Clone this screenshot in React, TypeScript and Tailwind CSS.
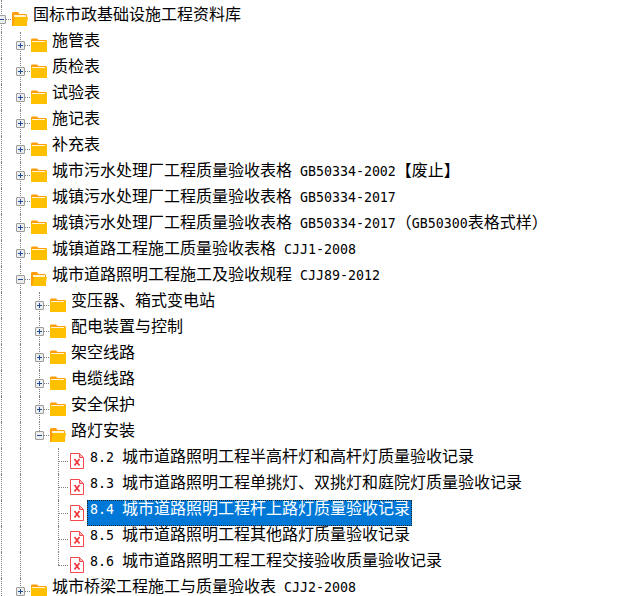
type RowData = {
  text: string
  depth: number
  kind: 'closed' | 'open' | 'file'
  selected?: boolean
  last?: boolean
}

const rows: RowData[] = [
  { text: '国标市政基础设施工程资料库', depth: 0, kind: 'open' },
  { text: '施管表', depth: 1, kind: 'closed' },
  { text: '质检表', depth: 1, kind: 'closed' },
  { text: '试验表', depth: 1, kind: 'closed' },
  { text: '施记表', depth: 1, kind: 'closed' },
  { text: '补充表', depth: 1, kind: 'closed' },
  { text: '城市污水处理厂工程质量验收表格 GB50334-2002【废止】', depth: 1, kind: 'closed' },
  { text: '城镇污水处理厂工程质量验收表格 GB50334-2017', depth: 1, kind: 'closed' },
  { text: '城镇污水处理厂工程质量验收表格 GB50334-2017（GB50300表格式样）', depth: 1, kind: 'closed' },
  { text: '城镇道路工程施工质量验收表格 CJJ1-2008', depth: 1, kind: 'closed' },
  { text: '城市道路照明工程施工及验收规程 CJJ89-2012', depth: 1, kind: 'open' },
  { text: '变压器、箱式变电站', depth: 2, kind: 'closed' },
  { text: '配电装置与控制', depth: 2, kind: 'closed' },
  { text: '架空线路', depth: 2, kind: 'closed' },
  { text: '电缆线路', depth: 2, kind: 'closed' },
  { text: '安全保护', depth: 2, kind: 'closed' },
  { text: '路灯安装', depth: 2, kind: 'open', last: true },
  { text: '8.2 城市道路照明工程半高杆灯和高杆灯质量验收记录', depth: 3, kind: 'file' },
  { text: '8.3 城市道路照明工程单挑灯、双挑灯和庭院灯质量验收记录', depth: 3, kind: 'file' },
  { text: '8.4 城市道路照明工程杆上路灯质量验收记录', depth: 3, kind: 'file', selected: true },
  { text: '8.5 城市道路照明工程其他路灯质量验收记录', depth: 3, kind: 'file' },
  { text: '8.6 城市道路照明工程工程交接验收质量验收记录', depth: 3, kind: 'file', last: true },
  { text: '城市桥梁工程施工与质量验收表 CJJ2-2008', depth: 1, kind: 'closed' },
]

function ClosedFolder() {
  return (
    <svg width="16" height="14" viewBox="0 0 16 14" className="block">
      <path d="M0 1.5 L1 0.5 H6 L7.5 2 H15 L16 3 V14 H0 Z" fill="#ff9d0a" />
      <rect x="0" y="3" width="16" height="11" fill="#ffc000" />
      <rect x="1" y="3" width="13" height="1" fill="#fff6d8" />
    </svg>
  )
}

function OpenFolder() {
  return (
    <svg width="16" height="14" viewBox="0 0 16 14" className="block">
      <path d="M0 1 L1 0 H6 L7.5 2 H14 L15 3 V14 H0 Z" fill="#ff9d0a" />
      <rect x="2" y="3" width="12" height="2" fill="#fff6d8" />
      <path d="M1 14 L3 5 H16 L14.5 14 Z" fill="#ffc000" />
    </svg>
  )
}

function FileIcon() {
  return (
    <svg width="14" height="16" viewBox="0 0 14 16" className="block">
      <path d="M0.5 0.5 H9.5 L13.5 4.5 V15.5 H0.5 Z" fill="#fff" stroke="#f4484e" />
      <path d="M9.5 1 V4.5 H13" fill="#fbb4b4" stroke="#f4484e" />
      <path d="M4.5 6 L9.5 12.5 M9.5 6 L4.5 12.5" stroke="#f0363c" strokeWidth="1.7" fill="none" />
    </svg>
  )
}

function Expander({ open }: { open: boolean }) {
  return (
    <div className="absolute left-[5px] top-[9px] flex h-[9px] w-[9px] items-center justify-center rounded-[1px] border border-[#9c9c9c] bg-[#eeeeee]">
      <svg width="7" height="7" viewBox="0 0 7 7" className="block">
        <rect x="1" y="3" width="5" height="1" fill="#1f4b99" />
        {!open && <rect x="3" y="1" width="1" height="5" fill="#1f4b99" />}
      </svg>
    </div>
  )
}

// latin runs are 8px wide per glyph, like the bitmap font in the tree
function Label({ text }: { text: string }) {
  const parts = text.match(/[\x00-\x7f]+|[^\x00-\x7f]+/g) ?? []
  return (
    <>
      {parts.map((p, i) =>
        /^[\x00-\x7f]/.test(p) ? (
          <span key={i} className="whitespace-pre font-['DejaVu_Sans_Mono',monospace] text-[13.28px]">
            {p}
          </span>
        ) : (
          <span key={i}>{p}</span>
        ),
      )}
    </>
  )
}

function Row({ row }: { row: RowData }) {
  const guides = Array.from({ length: row.depth }, (_, i) => i < 2 && !(row.depth === 3 && i === 2))
  return (
    <div className="flex h-[26px] items-center">
      {guides.map((on, i) => (
        <div key={i} className="relative h-[26px] w-[19px] shrink-0">
          {on && <div className="absolute bottom-0 left-[9px] top-0 border-l border-dotted border-[#808080]" />}
        </div>
      ))}
      <div className="relative h-[26px] w-[19px] shrink-0">
        <div
          className={
            row.last
              ? 'absolute left-[9px] top-0 h-[13px] border-l border-dotted border-[#808080]'
              : 'absolute bottom-0 left-[9px] top-0 border-l border-dotted border-[#808080]'
          }
        />
        <div className="absolute left-[9px] right-0 top-[13px] border-t border-dotted border-[#808080]" />
        {row.kind !== 'file' && <Expander open={row.kind === 'open'} />}
      </div>
      {row.kind === 'file' ? (
        <div className="ml-[2px] shrink-0">
          <FileIcon />
        </div>
      ) : (
        <div className="ml-px shrink-0">{row.kind === 'open' ? <OpenFolder /> : <ClosedFolder />}</div>
      )}
      <div
        className={
          row.selected
            ? 'ml-[3px] h-[26px] self-start whitespace-nowrap border border-dotted border-[#222222] bg-[#0078d7] pl-[2px] pr-px leading-[12px] text-white'
            : row.kind === 'file'
              ? 'ml-[6px] h-[26px] self-start whitespace-nowrap leading-[14px]'
              : 'ml-[5px] h-[26px] self-start whitespace-nowrap leading-[14px]'
        }
      >
        <Label text={row.text} />
      </div>
    </div>
  )
}

export default function App() {
  return (
    <div className="relative h-[596px] w-[643px] overflow-hidden bg-white font-['Noto_Sans_CJK_SC',sans-serif] text-[16px] text-black">
      <div className="absolute left-px top-0 h-[6px] border-l border-dotted border-[#808080]" />
      <div className="-ml-[8px] pt-[6px]">
        {rows.map((row, i) => (
          <Row key={i} row={row} />
        ))}
      </div>
    </div>
  )
}
